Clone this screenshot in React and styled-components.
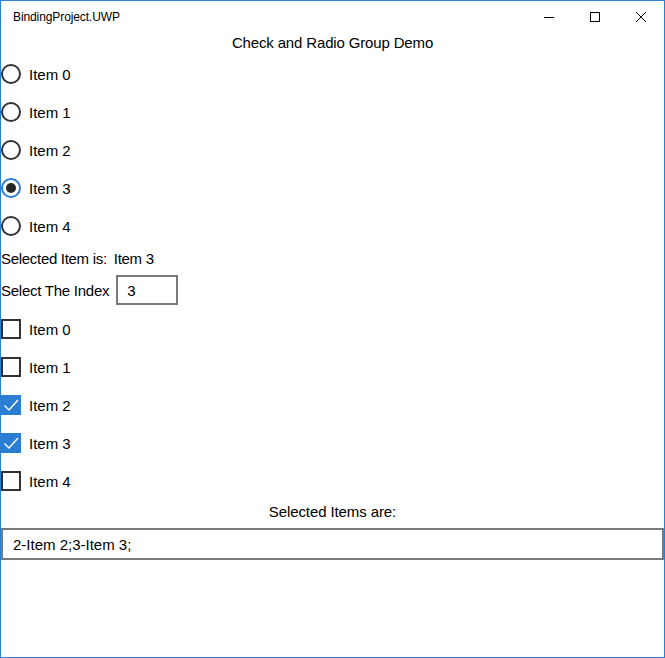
import React, { useState } from "react";
import styled, { createGlobalStyle } from "styled-components";

const GlobalStyle = createGlobalStyle`
  html, body {
    margin: 0;
    padding: 0;
    background: #ffffff;
  }
  * {
    box-sizing: border-box;
  }
`;

const items = ["Item 0", "Item 1", "Item 2", "Item 3", "Item 4"];

const App = () => {
  const [selected, setSelected] = useState(3);
  const [checked, setChecked] = useState([false, false, true, true, false]);

  const toggle = (i) => {
    setChecked(checked.map((c, j) => (j === i ? !c : c)));
  };

  const summary = checked
    .map((c, i) => (c ? `${i}-${items[i]};` : ""))
    .join("");

  return (
    <Window>
      <GlobalStyle />
      <TitleBar>
        <AppTitle>BindingProject.UWP</AppTitle>
        <Controls>
          <CaptionButton>
            <svg width="10" height="10" viewBox="0 0 10 10">
              <line x1="0" y1="5.5" x2="10" y2="5.5" stroke="#000" strokeWidth="1" />
            </svg>
          </CaptionButton>
          <CaptionButton>
            <svg width="10" height="10" viewBox="0 0 10 10">
              <rect x="0.5" y="0.5" width="9" height="9" fill="none" stroke="#000" strokeWidth="1" />
            </svg>
          </CaptionButton>
          <CaptionButton>
            <svg width="10" height="10" viewBox="0 0 10 10">
              <path d="M0 0 L10 10 M10 0 L0 10" stroke="#000" strokeWidth="1" />
            </svg>
          </CaptionButton>
        </Controls>
      </TitleBar>
      <Content>
        <Heading>Check and Radio Group Demo</Heading>
        <List>
          {items.map((label, i) => (
            <Row key={label} onClick={() => setSelected(i)}>
              <Radio checked={selected === i} />
              <Label>{label}</Label>
            </Row>
          ))}
        </List>
        <InfoLine>
          <span>Selected Item is:</span>
          <span>{items[selected]}</span>
        </InfoLine>
        <IndexLine>
          <span>Select The Index</span>
          <IndexBox
            value={selected}
            onChange={(e) => {
              const n = Number(e.target.value);
              if (n >= 0 && n < items.length) setSelected(n);
            }}
          />
        </IndexLine>
        <List>
          {items.map((label, i) => (
            <Row key={label} onClick={() => toggle(i)}>
              <Check checked={checked[i]}>
                {checked[i] && (
                  <svg width="20" height="20" viewBox="0 0 20 20">
                    <path
                      d="M3.5 10.5 L8 15 L17 5"
                      fill="none"
                      stroke="#fff"
                      strokeWidth="1.4"
                    />
                  </svg>
                )}
              </Check>
              <Label>{label}</Label>
            </Row>
          ))}
        </List>
        <Caption>Selected Items are:</Caption>
        <SummaryBox value={summary} readOnly />
      </Content>
    </Window>
  );
};

export default App;

const Window = styled.div`
  width: 665px;
  height: 658px;
  border: 1px solid #2b7fd4;
  background: #fff;
  font-family: "Liberation Sans", Arial, sans-serif;
  color: #000;
  display: flex;
  flex-direction: column;
`;

const TitleBar = styled.div`
  height: 31px;
  display: flex;
  align-items: center;
  justify-content: space-between;
  padding-left: 12px;
`;

const AppTitle = styled.span`
  font-size: 12px;
  margin-top: 1px;
  letter-spacing: -0.1px;
`;

const Controls = styled.div`
  display: flex;
  height: 100%;
`;

const CaptionButton = styled.div`
  width: 46px;
  height: 100%;
  display: flex;
  align-items: center;
  justify-content: center;
`;

const Content = styled.div`
  display: flex;
  flex-direction: column;
`;

const Heading = styled.div`
  height: 23px;
  line-height: 22px;
  font-size: 15px;
  letter-spacing: -0.15px;
  text-align: center;
`;

const List = styled.div`
  display: flex;
  flex-direction: column;
`;

const Row = styled.div`
  height: 38px;
  display: flex;
  align-items: center;
  gap: 8px;
  cursor: pointer;
`;

const Radio = styled.div`
  width: 20px;
  height: 20px;
  border-radius: 50%;
  border: 2px solid ${({ checked }) => (checked ? "#2b7cd3" : "#333")};
  display: flex;
  align-items: center;
  justify-content: center;
  &::after {
    content: "";
    display: ${({ checked }) => (checked ? "block" : "none")};
    width: 10px;
    height: 10px;
    border-radius: 50%;
    background: #262626;
  }
`;

const Check = styled.div`
  width: 20px;
  height: 20px;
  border: ${({ checked }) => (checked ? "none" : "2px solid #333")};
  background: ${({ checked }) => (checked ? "#2b7cd3" : "transparent")};
  display: flex;
  svg {
    display: block;
  }
`;

const Label = styled.span`
  font-size: 15px;
  color: #000;
`;

const InfoLine = styled.div`
  height: 26px;
  display: flex;
  align-items: center;
  gap: 7px;
  font-size: 15px;
  letter-spacing: -0.3px;
`;

const IndexLine = styled.div`
  display: flex;
  align-items: center;
  gap: 7px;
  font-size: 15px;
  letter-spacing: -0.25px;
  padding: 4px 0 5px;
`;

const IndexBox = styled.input`
  width: 62px;
  height: 30px;
  border: 2px solid #7a7a7a;
  padding: 0 9px;
  font-family: "Liberation Sans", Arial, sans-serif;
  font-size: 15px;
  color: #000;
  outline: none;
`;

const Caption = styled.div`
  height: 24px;
  line-height: 24px;
  text-align: center;
  font-size: 15px;
  letter-spacing: -0.1px;
`;

const SummaryBox = styled.input`
  margin-top: 4px;
  width: 663px;
  height: 32px;
  border: 2px solid #7a7a7a;
  padding: 0 10px;
  font-family: "Liberation Sans", Arial, sans-serif;
  font-size: 15px;
  color: #000;
  outline: none;
`;
